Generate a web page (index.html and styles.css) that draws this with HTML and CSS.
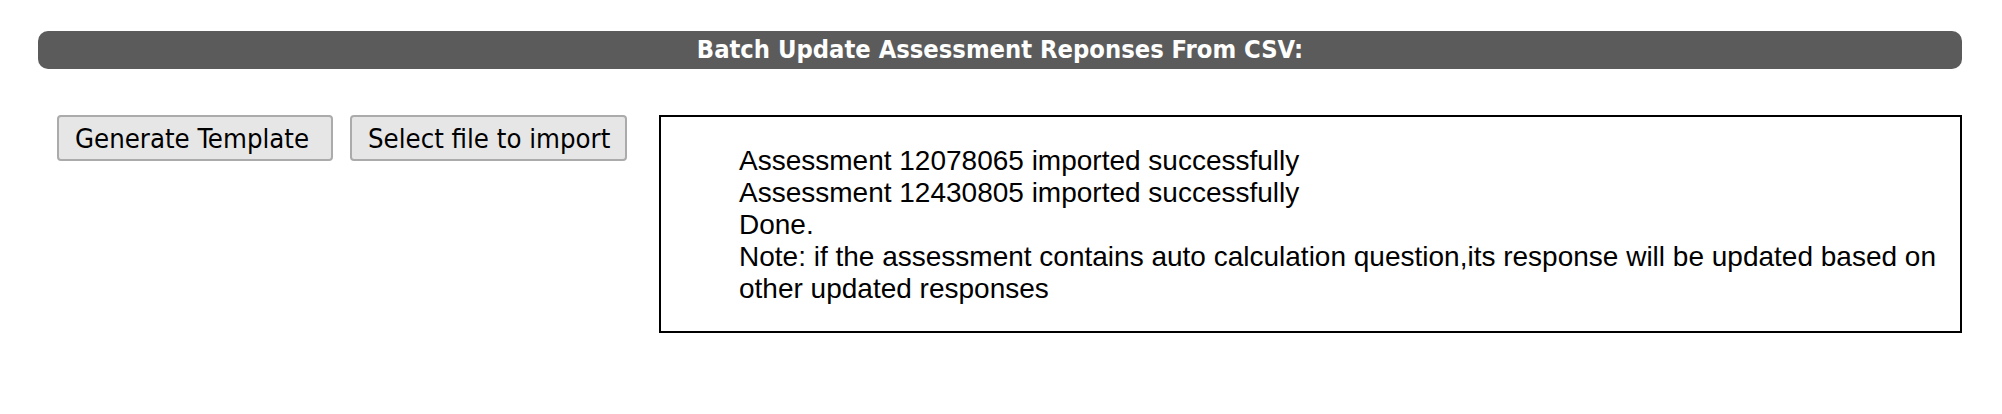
FILE: index.html
```html
<!DOCTYPE html>
<html lang="en">
<head>
<meta charset="utf-8">
<title>Batch Update Assessment Reponses From CSV</title>
<link rel="stylesheet" href="styles.css">
</head>
<body>
<div class="panel">
  <div class="panel-header">Batch Update Assessment Reponses From CSV:</div>
  <div class="panel-body">
    <div class="actions">
      <button class="btn btn-template" type="button">Generate Template</button>
      <button class="btn btn-import" type="button">Select file to import</button>
    </div>
    <div class="log">
      <div class="log-line">Assessment 12078065 imported successfully</div>
      <div class="log-line">Assessment 12430805 imported successfully</div>
      <div class="log-line">Done.</div>
      <div class="log-line">Note: if the assessment contains auto calculation question,its response will be updated based on other updated responses</div>
    </div>
  </div>
</div>
</body>
</html>
```
FILE: styles.css
```css
html, body {
  margin: 0;
  padding: 0;
  background: #ffffff;
}

.panel {
  padding: 31px 40px 0 38px;
}

.panel-header {
  height: 38px;
  line-height: 38px;
  background: #5b5b5b;
  border-radius: 10px;
  color: #ffffff;
  text-align: center;
  font-family: "DejaVu Sans Condensed", "DejaVu Sans", sans-serif;
  font-weight: bold;
  font-size: 25.3px;
}

.panel-body {
  display: flex;
  align-items: flex-start;
  margin-top: 46px;
  padding-left: 19px;
}

.actions {
  display: flex;
  gap: 17px;
}

.btn {
  box-sizing: border-box;
  height: 46px;
  padding: 0 0 0 16px;
  text-align: left;
  white-space: nowrap;
  background: #e6e6e6;
  border: 2px solid #ababab;
  border-radius: 4px;
  color: #000000;
  font-family: "DejaVu Sans Condensed", "DejaVu Sans", sans-serif;
  font-size: 27.3px;
}

.btn-template {
  width: 276px;
}

.btn-import {
  width: 277px;
}

.log {
  flex: 1;
  margin-left: 32px;
  min-height: 218px;
  box-sizing: border-box;
  border: 2px solid #000000;
  padding: 28px 12px 26px 78px;
  font-family: "Liberation Sans", Arial, sans-serif;
  font-size: 28px;
  line-height: 32px;
  color: #000000;
}
```
